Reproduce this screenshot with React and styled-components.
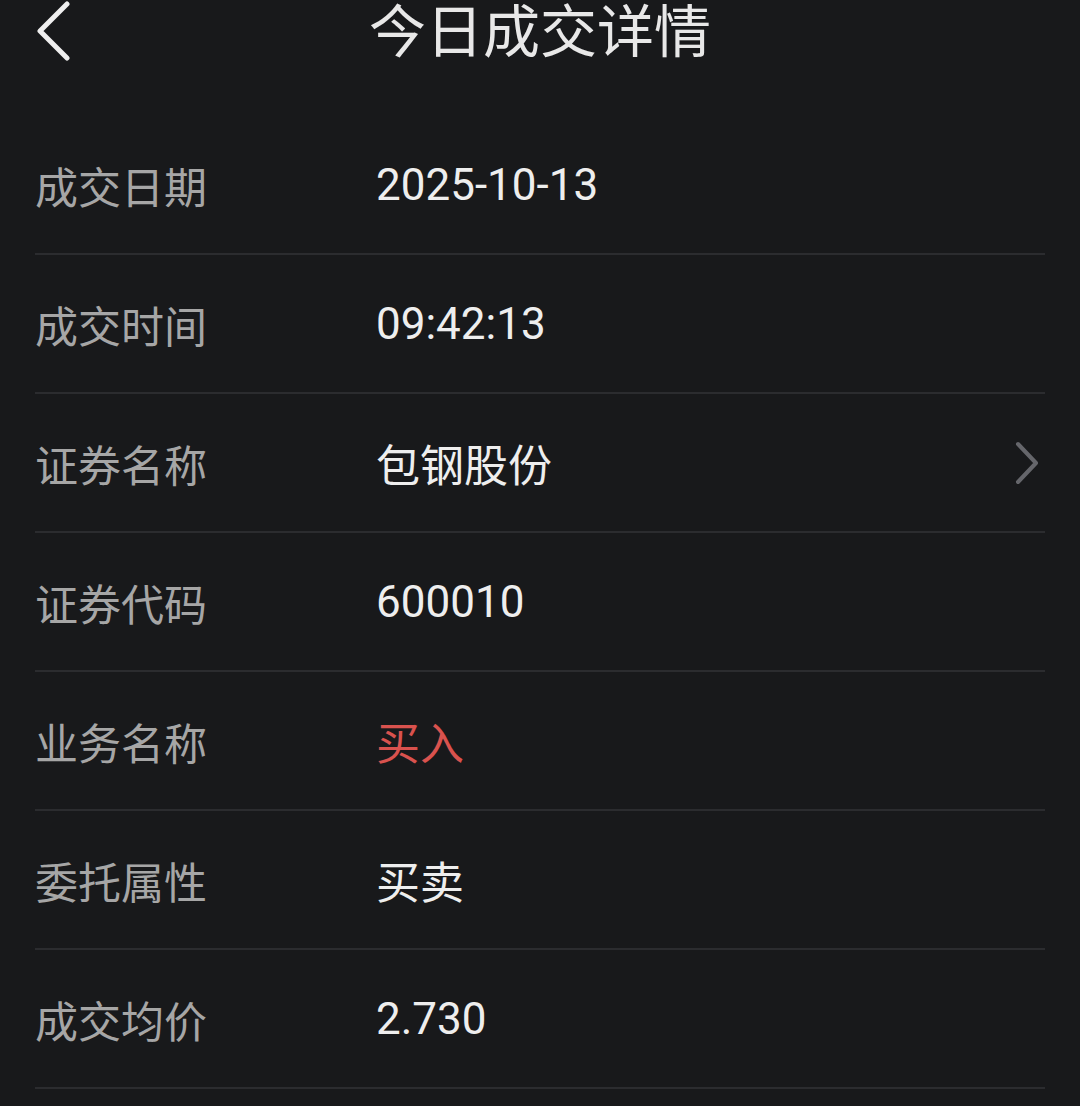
import React from 'react';
import styled, { createGlobalStyle } from 'styled-components';

const GlobalStyle = createGlobalStyle`
  html, body {
    margin: 0;
    padding: 0;
    background: #18191b;
  }
  body {
    font-family: Roboto, "Noto Sans CJK SC", sans-serif;
  }
`;

const rows = [
  { label: '成交日期', value: '2025-10-13' },
  { label: '成交时间', value: '09:42:13' },
  { label: '证券名称', value: '包钢股份', link: true },
  { label: '证券代码', value: '600010' },
  { label: '业务名称', value: '买入', tone: 'red' },
  { label: '委托属性', value: '买卖' },
  { label: '成交均价', value: '2.730' },
];

export default function App() {
  return (
    <>
      <GlobalStyle />
      <Page>
        <Header>
          <BackButton>
            <svg width="40" height="64" viewBox="0 0 40 64">
              <polyline points="30,4 3,31 30,58" fill="none" stroke="#efefef" strokeWidth="5" strokeLinecap="round" strokeLinejoin="round" />
            </svg>
          </BackButton>
          <Title>今日成交详情</Title>
        </Header>
        <List>
          {rows.map((row) => (
            <Row key={row.label}>
              <Label>{row.label}</Label>
              <Value $tone={row.tone}>{row.value}</Value>
              {row.link && (
                <Chevron width="30" height="44" viewBox="0 0 30 44">
                  <polyline points="7,3 25,22 7,41" fill="none" stroke="#65666b" strokeWidth="4" strokeLinecap="round" strokeLinejoin="round" />
                </Chevron>
              )}
            </Row>
          ))}
        </List>
      </Page>
    </>
  );
}

const Page = styled.div`
  width: 1080px;
  min-height: 1106px;
  background: #18191b;
  overflow: hidden;
`;

const Header = styled.div`
  position: relative;
  height: 64px;
  display: flex;
  align-items: flex-start;
  justify-content: center;
`;

const BackButton = styled.div`
  position: absolute;
  left: 37px;
  top: 0;
  height: 64px;
  display: flex;
  align-items: center;
`;

const Title = styled.h1`
  margin: 0;
  font-family: "Noto Sans CJK SC", sans-serif;
  font-weight: 400;
  font-size: 57px;
  line-height: 54px;
  color: #e8e8e8;
`;

const List = styled.div`
  padding: 52px 35px 0;
`;

const Row = styled.div`
  height: 137px;
  border-bottom: 2px solid #2b2c2f;
  display: flex;
  align-items: center;
`;

const Label = styled.div`
  width: 341px;
  flex-shrink: 0;
  font-family: "Noto Sans CJK SC", sans-serif;
  font-size: 43px;
  color: #a6a6a6;
`;

const Value = styled.div`
  flex: 1;
  font-family: Roboto, "Noto Sans CJK SC", sans-serif;
  font-size: 44px;
  color: ${(p) => (p.$tone === 'red' ? '#d9524e' : '#eeeeee')};
`;

const Chevron = styled.svg`
  margin-right: 4px;
`;
